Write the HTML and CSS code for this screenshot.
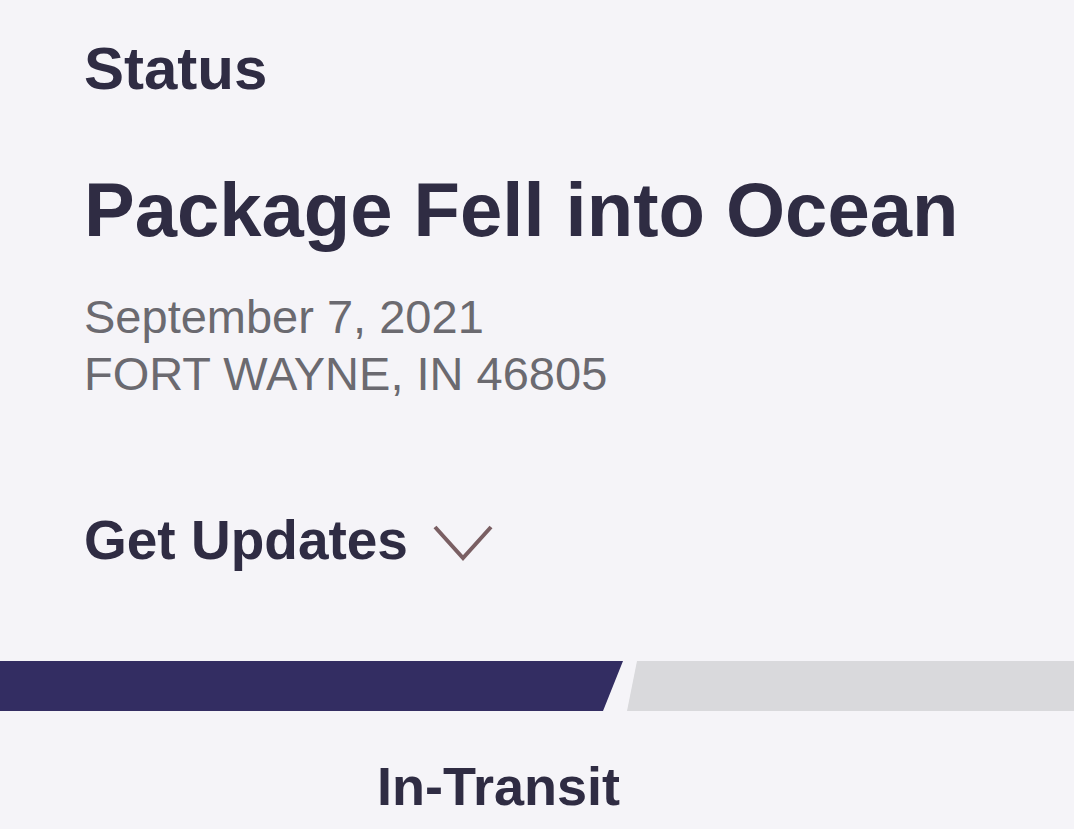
FILE: index.html
```html
<!DOCTYPE html>
<html>
<head>
    <meta name="viewport" content="width=device-width, initial-scale=1.0">
    <title>Tracking Status</title>
    <link rel="stylesheet" href="styles.css">
</head>
<body>
    <!-- Status card -->
    <div class="status-card">
        <div class="details">
            <h2 class="label">Status</h2>
            <h1 class="headline">Package Fell into Ocean</h1>
            <p class="meta">September 7, 2021<br>FORT WAYNE, IN 46805</p>
            <a class="updates" href="#">Get Updates
                <svg class="chevron" width="62" height="38" viewBox="0 0 62 38">
                    <polyline points="3,3 31,34 59,3" fill="none" stroke="#7a5f63" stroke-width="4"/>
                </svg>
            </a>
        </div>

        <!-- Progress bar -->
        <div class="progress">
            <div class="segment done"></div>
            <div class="segment todo"></div>
        </div>

        <div class="step-label">In-Transit</div>
    </div>
</body>
</html>
```

FILE: styles.css
```css
body {
    margin: 0;
    background-color: #f5f4f8;
    font-family: "Liberation Sans", Arial, sans-serif;
    color: #2f2c43;
}

.status-card {
    width: 1074px;
    height: 829px;
    overflow: hidden;
}

.details {
    padding: 39px 0 0 84px;
}

.label {
    margin: 0;
    font-size: 60px;
    line-height: 1;
    font-weight: bold;
}

.headline {
    margin: 73px 0 0;
    font-size: 76px;
    line-height: 1;
    font-weight: bold;
}

.meta {
    margin: 40px 0 0;
    font-size: 47px;
    line-height: 57px;
    color: #6b6a70;
}

.updates {
    display: flex;
    align-items: center;
    gap: 24px;
    margin-top: 111px;
    font-size: 55px;
    line-height: 1;
    font-weight: bold;
    color: #2f2c43;
    text-decoration: none;
}

.chevron {
    display: block;
    margin-top: 4px;
}

/* Progress bar */
.progress {
    display: flex;
    gap: 4px;
    margin-top: 93px;
    height: 50px;
}

.segment {
    height: 100%;
}

.done {
    width: 623px;
    background: #332d62;
    clip-path: polygon(0 0, 100% 0, calc(100% - 20px) 100%, 0 100%);
}

.todo {
    flex: 1;
    margin-left: -20px;
    background: #d9d9dc;
    clip-path: polygon(30px 0, 100% 0, 100% 100%, 20px 100%);
}

.step-label {
    margin: 48px 0 0 377px;
    font-size: 54px;
    line-height: 1;
    font-weight: bold;
}
```
